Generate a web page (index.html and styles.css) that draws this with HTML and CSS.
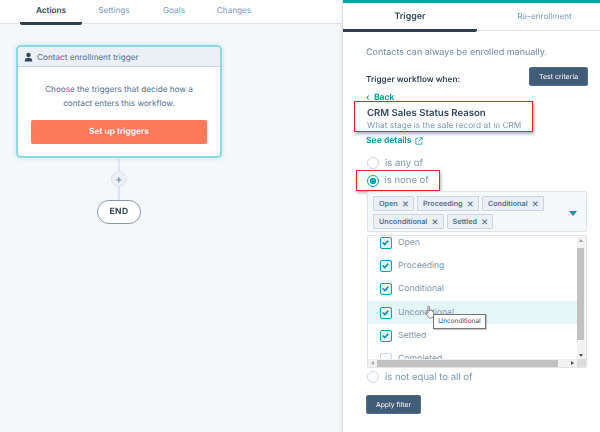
FILE: index.html
```html
<!DOCTYPE html>
<html lang="en">
<head>
<meta charset="utf-8">
<title>Workflow trigger</title>
<link rel="stylesheet" href="styles.css">
</head>
<body>
<div class="app">
  <main class="canvas">
    <nav class="tabs">
      <a class="tab active">Actions</a>
      <a class="tab t-settings">Settings</a>
      <a class="tab t-goals">Goals</a>
      <a class="tab t-settings">Changes</a>
    </nav>
    <div class="flow">
      <section class="card">
        <header class="card-head">
          <svg class="person" viewBox="0 0 12 12"><circle cx="6" cy="3.2" r="2.9"/><path d="M1 12c0-3.6 1.6-5 5-5s5 1.400 5 5z"/></svg>
          <span>Contact enrollment trigger</span>
        </header>
        <div class="card-body">
          <p>Choose the triggers that decide how a contact enters this workflow.</p>
          <button class="cta">Set up triggers</button>
        </div>
      </section>
      <div class="line l1"></div>
      <div class="plus">+</div>
      <div class="line l2"></div>
      <div class="end">END</div>
    </div>
  </main>
  <aside class="panel">
    <nav class="ptabs">
      <a class="ptab active">Trigger</a>
      <a class="ptab">Re-enrollment</a>
    </nav>
    <div class="pbody">
      <p class="note">Contacts can always be enrolled manually.</p>
      <div class="when">
        <strong>Trigger workflow when:</strong>
        <button class="dark test">Test criteria</button>
      </div>
      <a class="back">‹ &nbsp;Back</a>
      <div class="prop redbox">
        <h2>CRM Sales Status Reason</h2>
        <p>What stage is the sale record at in CRM</p>
      </div>
      <a class="details">See details
        <svg viewBox="0 0 10 10"><path d="M4 1.500H1v7.500h7.500V6M5.500 1h3.500v3.500M9 1 4.500 5.500"/></svg>
      </a>
      <label class="radio r1"><i></i>is any of</label>
      <label class="radio r2 on redbox"><i></i>is none of</label>
      <div class="select">
        <div class="tags">
          <span class="tag">Open<b>×</b></span>
          <span class="tag">Proceeding<b>×</b></span>
          <span class="tag">Conditional<b>×</b></span>
          <span class="tag">Unconditional<b>×</b></span>
          <span class="tag">Settled<b>×</b></span>
        </div>
        <span class="caret"></span>
      </div>
      <div class="list">
        <div class="rows">
          <div class="row"><i class="box"><svg viewBox="0 0 10 10"><path d="M2 5l2.200 2.300L8 3"/></svg></i>Open</div>
          <div class="row"><i class="box"><svg viewBox="0 0 10 10"><path d="M2 5l2.200 2.300L8 3"/></svg></i>Proceeding</div>
          <div class="row"><i class="box"><svg viewBox="0 0 10 10"><path d="M2 5l2.200 2.300L8 3"/></svg></i>Conditional</div>
          <div class="row hover"><i class="box"><svg viewBox="0 0 10 10"><path d="M2 5l2.200 2.300L8 3"/></svg></i>Unconditional</div>
          <div class="row"><i class="box"><svg viewBox="0 0 10 10"><path d="M2 5l2.200 2.300L8 3"/></svg></i>Settled</div>
          <div class="row"><i class="box off"></i>Completed</div>
        </div>
        <div class="vbar"><span class="up"></span><span class="vthumb"></span><span class="down"></span></div>
        <div class="hbar"><span class="lf"></span><span class="hthumb"></span><span class="rt"></span></div>
        <div class="corner"></div>
        <div class="tooltip">Unconditional</div>
        <svg class="hand" viewBox="0 0 12 17"><path d="M3.500 1.500c0-1 1.700-1 1.700 0V7l.3-1.300c1.200-.5 1.700.2 1.700.8.800-.5 1.600 0 1.600.7.900-.3 1.600.2 1.600 1v3.300c0 2-1.200 3.500-3 3.500H6c-1.500 0-2.300-1-3-2.300L1 9.500c-.5-1 .6-1.800 1.400-1L3.500 10z"/></svg>
      </div>
      <label class="radio r3"><i></i>is not equal to all of</label>
      <button class="dark apply">Apply filter</button>
    </div>
  </aside>
</div>
</body>
</html>
```

FILE: styles.css
```css
* { box-sizing: border-box; }
html, body { margin: 0; height: 100%; }
body { width: 600px; height: 432px; overflow: hidden; font-family: "Inter", "Liberation Sans", sans-serif; color: #516f90; font-size: 8.200px; text-rendering: geometricPrecision; }
p, h2 { margin: 0; }
button { font-family: inherit; border: 0; padding: 0; text-rendering: geometricPrecision; }
.app { display: flex; width: 600px; height: 432px; filter: blur(.3px); }

.canvas { width: 343px; background: #f5f8fa; border-right: 1px solid #e3e8ee; }
.tabs { height: 24px; background: #fff; border-bottom: 1px solid #dfe3eb; display: flex; padding-left: 20px; }
.tab { width: 56px; text-align: center; padding-top: 5px; height: 25px; color: #7c98b6; font-size: 8.200px; }
.t-settings { width: 64px; }
.tab.active { width: 62px; color: #33475b; font-weight: 600; border-bottom: 3px solid #2d3e50; border-radius: 0 0 2px 2px; }

.flow { width: 206px; margin: 21px 0 0 16px; display: flex; flex-direction: column; align-items: center; }
.card { width: 206px; height: 113px; background: #fff; border: 2px solid #8bd9e2; border-radius: 5px; box-shadow: 0 0 5px rgba(0,164,189,.25); overflow: hidden; }
.card-head { height: 20px; background: #eaf0f6; border-bottom: 1px solid #cbd6e2; display: flex; align-items: center; gap: 4px; padding-left: 6px; color: #516f90; font-size: 8.200px; }
.person { width: 9px; height: 10px; fill: #33475b; }
.card-body { padding: 15px 13px 0; text-align: center; }
.card-body p { line-height: 14px; padding: 0 10px; }
.cta { display: block; width: 176px; height: 24px; margin-top: 10px; background: #ff7a59; color: #fff; font-weight: 600; font-size: 8.400px; border-radius: 2px; }
.line { width: 2px; background: #dfe3eb; }
.l1 { height: 13px; }
.l2 { height: 13px; }
.plus { width: 16px; height: 16px; border-radius: 50%; background: #eaf0f6; border: 1px solid #dfe3eb; color: #516f90; font-size: 11px; line-height: 14px; text-align: center; }
.end { width: 44px; height: 24px; border: 1px solid #8a99aa; border-radius: 12px; background: #fff; color: #33475b; font-weight: 700; font-size: 8.500px; letter-spacing: .4px; text-align: center; line-height: 22px; }

.panel { width: 257px; border-top: 3px solid #00a4a6; background: #fff; box-shadow: -2px 0 4px rgba(45,62,80,.08); }
.ptabs { display: flex; height: 28px; border-bottom: 1px solid #dfe3eb; }
.ptab { flex: 1; text-align: center; padding: 8px 0 0 12px; color: #7c98b6; font-size: 8.200px; }
.ptab.active { flex: 0 0 134px; height: 29px; padding-left: 0; color: #33475b; font-weight: 600; font-size: 8.900px; border-bottom: 3px solid #2d3e50; border-radius: 0 0 2px 0; }

.pbody { padding: 16px 12px 0 23px; display: flex; flex-direction: column; align-items: flex-start; }
.note { line-height: 12px; font-size: 9px; color: #6f8aa5; }
.when { width: 222px; height: 19px; margin-top: 8px; display: flex; justify-content: space-between; align-items: center; }
.when strong { color: #33475b; font-weight: 600; font-size: 8.200px; padding-top: 5px; }
.dark { background: #425b76; color: #fff; border-radius: 2px; border: 1px solid #516f90; font-size: 7px; }
.test { width: 59px; height: 19px; }
.back { height: 10px; margin-top: 5px; color: #0091ae; font-weight: 600; font-size: 8.600px; line-height: 14px; }
.prop { position: relative; width: 179px; height: 31px; margin: 0 0 0 -12px; padding: 5px 0 0 12px; background: #fff; }
.redbox { border: 1.500px solid #e8242b; box-shadow: 1px 2px 3px rgba(0,0,0,.3); }
.prop h2 { font-size: 9.600px; line-height: 13px; font-weight: 600; color: #33475b; }
.prop p { line-height: 13px; color: #7c98b6; font-size: 8.300px; }
.details { height: 14px; margin-top: 2px; line-height: 14px; color: #0091ae; font-weight: 600; font-size: 8.600px; display: flex; align-items: center; gap: 3px; }
.details svg { width: 8px; height: 8px; fill: none; stroke: #0091ae; stroke-width: .9; }

.radio { display: flex; align-items: center; gap: 6px; color: #7c98b6; font-size: 9.500px; height: 14px; }
.radio i { width: 12px; height: 12px; flex: none; border: 1px solid #cbd6e2; border-radius: 50%; background: #fff; }
.r1 { margin-top: 8px; padding-left: 1px; }
.r2 { width: 84px; height: 21px; margin: 0 0 0 -10px; padding-left: 9.500px; }
.r2 i { border: 1px solid #00a4bd; background: radial-gradient(circle, #00a4bd 0 3px, #fff 3.500px); }
.select { position: relative; width: 220px; height: 41px; margin: 0 0 0 1px; background: #f5f8fa; border: 1px solid #dfe3eb; border-radius: 2px; padding: 4px 20px 0 5px; }
.tags { display: flex; flex-wrap: wrap; gap: 3px; }
.tag { height: 15px; padding: 0 4px 0 5px; background: #eaf0f6; border: 1px solid #cbd6e2; border-radius: 1px; color: #516f90; font-weight: 600; font-size: 7.200px; line-height: 13px; display: flex; gap: 4px; }
.tag b { font-weight: 400; font-size: 11px; line-height: 12px; }
.caret { position: absolute; right: 9px; top: 19px; border: 4px solid transparent; border-top: 5px solid #0091ae; border-bottom: 0; }

.list { position: relative; width: 220px; height: 133px; margin: 3px 0 0 1px; border: 1px solid #dfe3eb; border-radius: 2px; background: #fff; display: grid; grid-template-columns: 1fr 9px; grid-template-rows: 1fr 8px; }
.rows { overflow: hidden; }
.row { height: 23.300px; display: flex; align-items: center; gap: 6px; padding-left: 12px; color: #8497a8; font-size: 8.600px; position: relative; top: -5px; }
.row.hover { background: #e5f5f8; }
.box { width: 12px; height: 12px; border: 1.500px solid #00a4bd; border-radius: 2px; background: #e5f5f8; display: block; }
.box.off { background: #fff; border: 1px solid #cbd6e2; }
.box svg { display: block; width: 9px; height: 9px; fill: none; stroke: #0091ae; stroke-width: 1.800; }
.vbar { background: #f1f1f1; display: flex; flex-direction: column; align-items: center; padding-right: 2px; }
.vthumb { width: 7px; height: 92px; background: #c1c1c1; margin-top: 6px; }
.up, .down, .lf, .rt { flex: none; display: block; width: 0; height: 0; border: 2.500px solid transparent; }
.up { border-top: 0; border-bottom: 3px solid #a3a3a3; margin-top: 3px; }
.down { border-bottom: 0; border-top: 3px solid #505050; margin-top: auto; margin-bottom: 2px; }
.hbar { background: #f1f1f1; display: flex; align-items: center; grid-column: 1; padding: 0 3px; }
.lf { border-left: 0; border-right: 3px solid #a3a3a3; }
.hthumb { width: 181px; height: 7px; margin-left: 3px; background: #c1c1c1; }
.rt { margin-left: auto; border-right: 0; border-left: 3px solid #505050; }
.corner { background: #dcdcdc; }
.tooltip { position: absolute; left: 65px; top: 78px; width: 53px; height: 15px; background: #fff; border: 1px solid #767676; color: #4c4c4c; font-size: 6.500px; line-height: 13px; text-align: center; box-shadow: 1px 1px 1px rgba(0,0,0,.2); }
.hand { position: absolute; left: 57px; top: 69px; width: 10px; height: 15px; fill: #fff; stroke: #555; stroke-width: .8; }
.r3 { margin-top: 2px; padding-left: 1px; }
.apply { width: 55px; height: 19px; margin-top: 11px; font-size: 6.800px; }
```
